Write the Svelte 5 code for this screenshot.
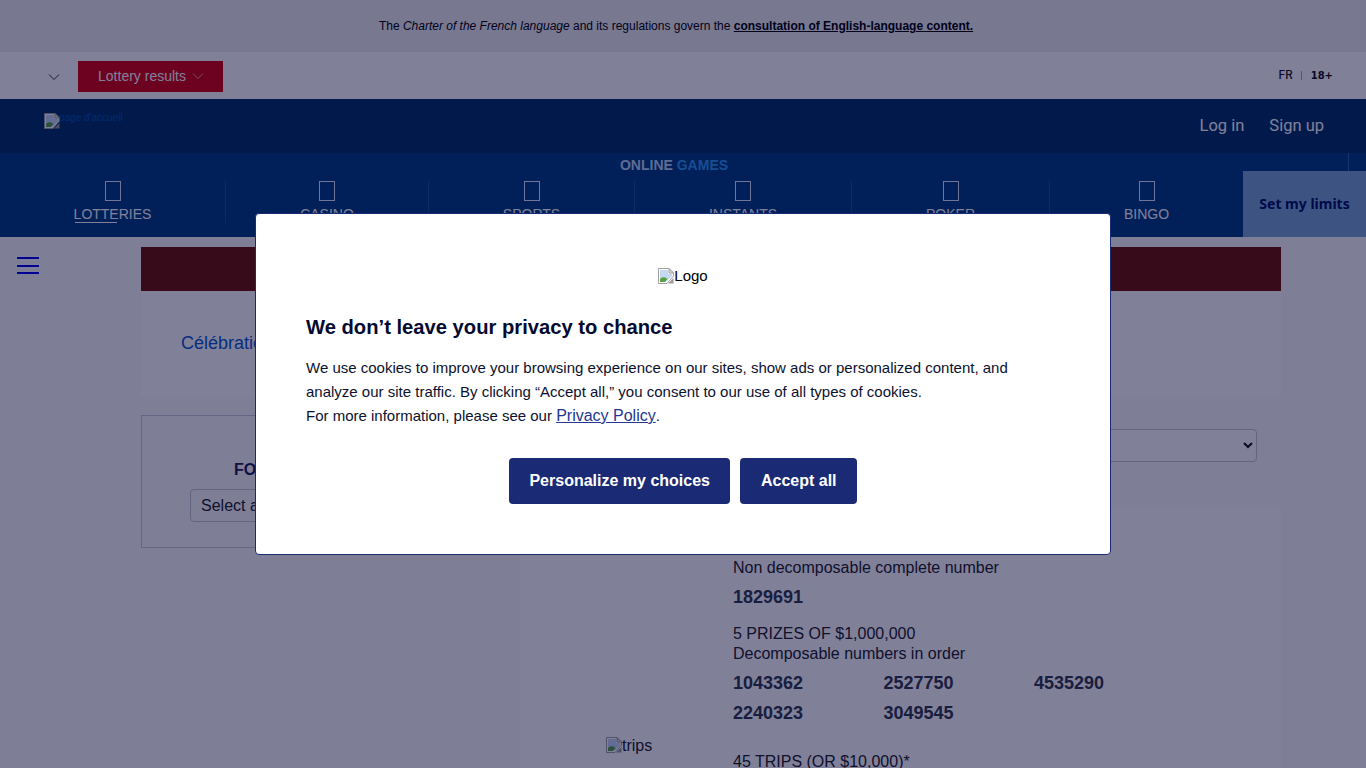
<script>
  const tabs = [
    { label: 'LOTTERIES', active: true },
    { label: 'CASINO' },
    { label: 'SPORTS' },
    { label: 'INSTANTS' },
    { label: 'POKER' },
    { label: 'BINGO' }
  ];
  const row1 = ['1043362', '2527750', '4535290'];
  const row2 = ['2240323', '3049545'];
</script>

{#snippet broken()}
  <svg class="broken" width="16" height="16" viewBox="0 0 16 16" aria-hidden="true">
    <path d="M0.5 0.5H11L15.5 5V8L9 15.5H0.5Z" fill="#fff" stroke="#a0a0a0" />
    <path d="M11 0.5V5H15.5Z" fill="#dcdcdc" stroke="#a0a0a0" />
    <path d="M2 2H10V6H14V8L9 13H2Z" fill="#c5d9f5" />
    <path d="M2 14V11C4 8.500 7 8.500 9.500 11L7 14Z" fill="#5aa048" />
    <path d="M10 15.500L15.500 10V15.500Z" fill="#9a9a9a" />
  </svg>
{/snippet}

<div class="page">
  <div class="notice">
    <p>The <em>Charter of the French language</em> and its regulations govern the <a href="#n">consultation of English-language content.</a></p>
  </div>

  <div class="utility">
    <svg class="chev dark" width="12" height="8" viewBox="0 0 12 8"><path d="M1 1.5L6 6.5L11 1.5" fill="none" stroke="#333" stroke-width="1" /></svg>
    <button class="results">Lottery results
      <svg class="chev" width="12" height="8" viewBox="0 0 12 8"><path d="M1 1.5L6 6.5L11 1.5" fill="none" stroke="#e9a" stroke-width="1" /></svg>
    </button>
    <div class="lang"><span class="fr">FR</span><span class="sep"></span><span class="age">18+</span></div>
  </div>

  <header class="head">
    <a class="home" href="#h">{@render broken()}<span>page d'accueil</span></a>
    <nav class="account"><a href="#l">Log in</a><a href="#s">Sign up</a></nav>
  </header>

  <div class="games">
    <div class="games-title">ONLINE <span>GAMES</span></div>
    <i class="tick"></i>
    <div class="tabs">
      {#each tabs as t}
        <a class="tab" href="#t">
          <span class="tofu"></span>
          <span class="tab-label" class:active={t.active}>{t.label}</span>
        </a>
      {/each}
    </div>
    <a class="limits" href="#m">Set my limits</a>
  </div>

  <div class="body">
    <button class="burger" aria-label="Menu"><i></i><i></i><i></i></button>
    <div class="main">
      <div class="strip"></div>
      <div class="intro"><a href="#c">Célébration</a></div>
      <div class="columns">
        <aside class="filter">
          <b>FORMAT</b>
          <div class="fake-select">Select a</div>
        </aside>
        <section class="results-col">
          <div class="select-row"><select aria-label="Draw"><option></option></select></div>
          <div class="card">
            <div class="thumb">{@render broken()}<span>trips</span></div>
            <div class="prizes">
              <p class="lead">1 PRIZE OF $1,000,000<br />Non decomposable complete number</p>
              <div class="num one">1829691</div>
              <p class="lead second">5 PRIZES OF $1,000,000<br />Decomposable numbers in order</p>
              <div class="grid">
                {#each row1 as n}<div class="num">{n}</div>{/each}
                {#each row2 as n}<div class="num">{n}</div>{/each}
              </div>
              <p class="lead third">45 TRIPS (OR $10,000)*</p>
            </div>
          </div>
        </section>
      </div>
    </div>
  </div>

  <div class="veil"></div>
  <div class="center">
    <div class="modal" role="dialog">
      <div class="logo">{@render broken()}<span>Logo</span></div>
      <h2>We don’t leave your privacy to chance</h2>
      <p class="copy">We use cookies to improve your browsing experience on our sites, show ads or personalized content, and<br />analyze our site traffic. By clicking “Accept all,” you consent to our use of all types of cookies.<br />For more information, please see our <a href="#p">Privacy Policy</a>.</p>
      <div class="actions">
        <button>Personalize my choices</button>
        <button>Accept all</button>
      </div>
    </div>
  </div>
</div>

<style>
  :global(body) { margin: 0; background: #fff; }
  .page { position: relative; height: 100vh; overflow: hidden; font-family: "Liberation Sans", Arial, sans-serif; color: #1b2350; background: #fafafa; }
  .broken { flex: none; display: block; }

  .notice { height: 52px; background: #eff0ef; display: flex; align-items: center; justify-content: center; padding-right: 14px; }
  .notice p { margin: 0; font-size: 12px; color: #000; }
  .notice a { color: #000; font-weight: 700; }

  .utility { height: 47px; display: flex; align-items: center; background: #fff; padding: 2px 33px 0 48px; box-sizing: border-box; }
  .utility > .chev { margin-right: 18px; }
  .results { width: 145px; height: 31px; border: 0; background: #d8000c; color: #fff; font: 14px "Liberation Sans", Arial, sans-serif; display: flex; align-items: center; justify-content: center; gap: 6px; padding: 0 0 2px 1px; }
  .lang { margin-left: auto; margin-bottom: 3px; display: flex; align-items: center; font-family: Inter, sans-serif; font-size: 11.5px; color: #111; }
  .fr { font-weight: 500; }
  .sep { width: 1px; height: 9px; background: #aaa; margin: 0 9px 0 8px; }
  .age { font: 700 10px "DejaVu Sans", sans-serif; }

  .head { height: 54px; background: #003363; display: flex; justify-content: space-between; padding: 14px 42px 0 44px; box-sizing: border-box; }
  .home { display: flex; height: 16px; text-decoration: none; font-size: 10px; color: #0054ae; }
  .home span { margin-left: -1px; margin-top: -1px; }
  .account { display: flex; gap: 25px; padding-top: 3px; }
  .account a { color: #fff; font: 16.5px Roboto, sans-serif; text-decoration: none; }

  .games { position: relative; height: 84px; background: #003c7c; }
  .games-title { position: absolute; top: 4px; left: 0; width: 1348px; text-align: center; font-size: 14px; font-weight: 700; color: #b8d6f2; }
  .games-title span { color: #2a9bf0; }
  .tick { position: absolute; left: 1348px; top: 0; width: 1px; height: 18px; background: #2d69a8; }
  .tabs { position: absolute; left: 0; top: 28px; width: 1243px; height: 42px; display: grid; grid-template-columns: 226px 203px 206px 217px 198px 193px; }
  .tab { display: flex; flex-direction: column; align-items: center; text-decoration: none; color: #fff; border-right: 1px solid #1d5597; box-sizing: border-box; }
  .tab:last-child { border-right: 0; }
  .tofu { width: 16px; height: 20px; border: 1px solid #dfeaff; box-sizing: border-box; }
  .tab-label { position: relative; font-size: 14px; line-height: 16px; margin-top: 5px; }
  .tab-label.active::after { content: ""; position: absolute; left: 1px; top: 16px; width: 42px; height: 1px; background: #fff; }
  .limits { position: absolute; right: 0; top: 18px; width: 123px; height: 66px; box-sizing: border-box; background: #78a6d2; color: #00105e; font: 700 14px "Noto Sans", sans-serif; display: flex; align-items: center; justify-content: center; text-decoration: none; padding-bottom: 2px; }

  .body { position: relative; padding: 10px 85px 0 141px; }
  .burger { position: absolute; left: 17px; top: 20px; width: 22px; height: 17px; padding: 0; border: 0; background: none; display: flex; flex-direction: column; justify-content: space-between; }
  .burger i { display: block; height: 2px; background: #0000ee; }
  .strip { height: 44px; background: #6c1500; }
  .intro { height: 106px; background: #fff; box-sizing: border-box; padding: 42px 40px 0; font-size: 18px; line-height: 20px; }
  .intro a { color: #0a58ca; text-decoration: none; }
  .columns { display: flex; margin-top: 18px; align-items: flex-start; }
  .filter { width: 363px; height: 133px; flex: none; box-sizing: border-box; border: 1px solid #c9c9d4; padding: 45px 48px 0; }
  .filter b { display: block; font-size: 16px; line-height: 18px; margin-left: 44px; white-space: nowrap; }
  .fake-select { margin-top: 10px; height: 33px; box-sizing: border-box; border: 1px solid #c6c6d0; border-radius: 4px; padding-left: 10px; line-height: 31px; font-size: 16px; color: #222; }
  .results-col { margin-left: 16px; flex: 1; min-width: 0; }
  .select-row { display: flex; justify-content: flex-end; height: 92px; padding: 14px 24px 0 0; box-sizing: border-box; }
  select { width: 300px; height: 33px; border: 1px solid #c6c6d0; border-radius: 4px; background: #fff; color: #111; font: 14px "Liberation Sans", Arial, sans-serif; }
  .card { display: flex; height: 300px; background: #fff; }
  .thumb { width: 213px; flex: none; display: flex; align-items: flex-start; padding: 230px 0 0 86px; box-sizing: border-box; font-size: 16px; line-height: 18px; color: #222; }
  .prizes { padding-top: 31px; flex: 1; }
  .lead { margin: 0; font-size: 16px; line-height: 20px; color: #222; }
  .num { font-size: 18px; line-height: 30px; font-weight: 700; color: #333a48; }
  .one { margin-top: 4px; }
  .lead.second { margin-top: 12px; }
  .grid { display: grid; grid-template-columns: repeat(3, 150.5px); margin-top: 4px; }
  .lead.third { margin-top: 24px; }

  .veil { position: absolute; inset: 0; background: rgba(2, 2, 52, .5); }
  .center { position: absolute; inset: 0; display: flex; align-items: center; justify-content: center; }
  .modal { width: 856px; height: 342px; box-sizing: border-box; background: #fff; border: 1px solid #1a2a75; border-radius: 4px; padding: 53px 50px 0; color: #0b1130; }
  .logo { display: flex; justify-content: center; align-items: center; font-size: 15px; color: #000; height: 17px; }
  h2 { margin: 30px 0 0; font-size: 20.2px; line-height: 26px; font-weight: 700; color: #050a30; }
  .copy { margin: 16px 0 0; font-size: 15px; line-height: 24px; color: #0b1130; }
  .copy a { color: #24368f; font-size: 16px; }
  .actions { display: flex; justify-content: center; gap: 10px; margin-top: 30px; }
  .actions button { height: 46px; padding: 0 20.5px; border: 0; border-radius: 4px; background: #1a2a75; color: #fff; font: 700 16px "Liberation Sans", Arial, sans-serif; }
</style>
